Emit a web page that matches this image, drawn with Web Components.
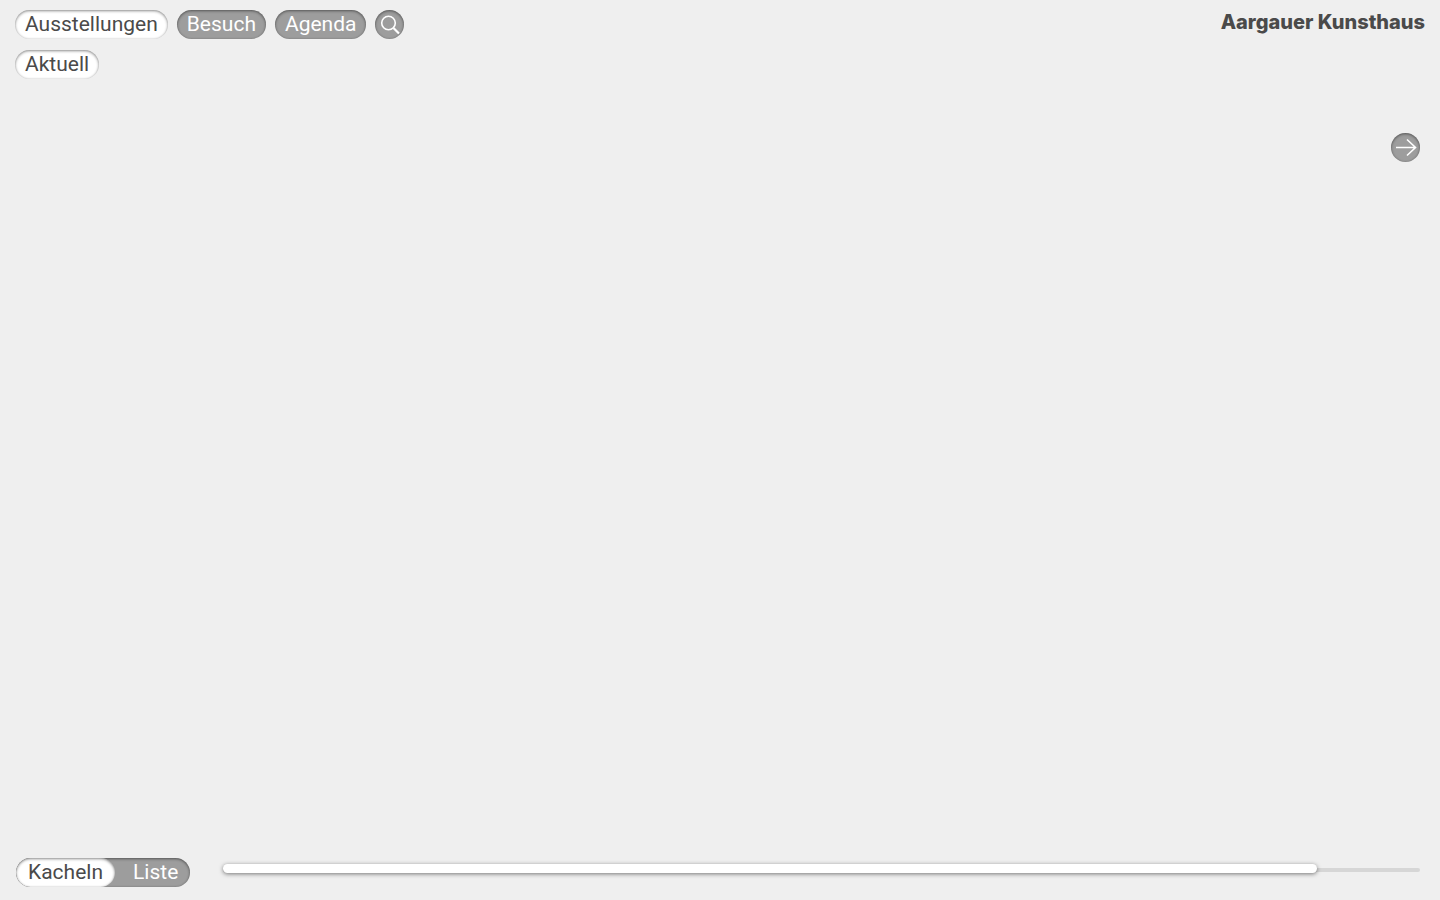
<!DOCTYPE html>
<html lang="de">
<head>
<meta charset="utf-8">
<meta name="viewport" content="width=device-width, initial-scale=1">
<title>Aargauer Kunsthaus</title>
<style>
  html, body { margin: 0; min-height: 100%; }
  body {
    --ink: #4a4a4a;
    --grey: #9d9d9d;
    --groove: inset 0 1px 3px rgba(0, 0, 0, .45), inset 0 0 2px rgba(0, 0, 0, .1);
    background: #efefef;
    color: var(--ink);
    font: 21px/28px Roboto, "Liberation Sans", sans-serif;
  }
</style>
</head>
<body>
<museum-page>
  <main-nav slot="nav">
    <pill-link active href="#ausstellungen">Ausstellungen</pill-link>
    <pill-link href="#besuch">Besuch</pill-link>
    <pill-link href="#agenda">Agenda</pill-link>
    <round-button label="Suche" icon="search"></round-button>
  </main-nav>
  <site-brand slot="brand">Aargauer Kunsthaus</site-brand>
  <main-nav slot="subnav">
    <pill-link active href="#aktuell">Aktuell</pill-link>
  </main-nav>
  <round-button slot="next" label="Weiter" icon="arrow"></round-button>
  <view-toggle slot="view"></view-toggle>
  <tile-scroller slot="scroll"></tile-scroller>
</museum-page>
<script>
const define = (name, html, setup) => {
  const template = document.createElement('template');
  template.innerHTML = html;
  customElements.define(name, class extends HTMLElement {
    constructor() {
      super();
      this.attachShadow({ mode: 'open' }).append(template.content.cloneNode(true));
    }
    connectedCallback() { if (setup) setup(this, this.shadowRoot); }
  });
};

define('museum-page', `
  <style>
    :host { display: flex; flex-direction: column; min-height: 100vh; box-sizing: border-box; padding: 10px 15px 13px; }
    header { display: flex; justify-content: space-between; align-items: flex-start; }
    .sub { margin-top: 11px; }
    main { flex: 1; display: flex; justify-content: flex-end; align-items: flex-start; padding: 54px 5px 0 0; }
    footer { display: flex; align-items: flex-start; gap: 33px; padding: 0 5px 0 1px; }
    ::slotted([slot=scroll]) { flex: 1; }
  </style>
  <header><slot name="nav"></slot><slot name="brand"></slot></header>
  <div class="sub"><slot name="subnav"></slot></div>
  <main><slot name="next"></slot></main>
  <footer><slot name="view"></slot><slot name="scroll"></slot></footer>
`);

define('main-nav', `
  <style>
    :host { display: block; }
    nav { display: flex; gap: 9px; }
  </style>
  <nav><slot></slot></nav>
`);

define('pill-link', `
  <style>
    :host { display: block; }
    a {
      display: block; box-sizing: border-box; height: 29px; padding: 0 10px;
      border-radius: 15px; background: var(--grey); box-shadow: var(--groove);
      color: #fff; text-decoration: none; white-space: nowrap;
    }
    :host([active]) a { background: #fff; color: var(--ink); }
  </style>
  <a><slot></slot></a>
`, (host, root) => { root.querySelector('a').href = host.getAttribute('href'); });

define('site-brand', `
  <style>
    :host { display: block; }
    a { display: block; color: inherit; text-decoration: none; font: 800 20px/24px Inter, "Liberation Sans", sans-serif; }
  </style>
  <a href="#start"><slot></slot></a>
`);

const icons = {
  search: '<circle cx="13.5" cy="13" r="6.8" stroke-width="1.6"/><path d="M18.5 18 24 23.5" stroke-width="2.2"/>',
  arrow: '<path d="M5 14.5H24.5M16 6.5 24.5 14.5 16 22.5" stroke-width="1.6"/>'
};
define('round-button', `
  <style>
    :host { display: block; }
    button {
      display: block; width: 29px; height: 29px; padding: 0; border: 0;
      border-radius: 50%; background: var(--grey); box-shadow: var(--groove);
    }
    svg { display: block; fill: none; stroke: #fff; }
  </style>
  <button type="button"><svg viewBox="0 0 29 29" width="29" height="29" aria-hidden="true"></svg></button>
`, (host, root) => {
  root.querySelector('button').setAttribute('aria-label', host.getAttribute('label'));
  root.querySelector('svg').innerHTML = icons[host.getAttribute('icon')];
});

define('view-toggle', `
  <style>
    :host { display: block; }
    fieldset {
      display: flex; margin: 0; padding: 0; border: 0; height: 29px; min-width: 0;
      border-radius: 15px; overflow: hidden; background: var(--grey); box-shadow: var(--groove);
    }
    input { appearance: none; width: 0; height: 0; margin: 0; }
    label { padding: 0 12px; border-radius: 15px; color: #fff; }
    label + input + label { padding-left: 18px; }
    input:checked + label { background: #fff; color: var(--ink); box-shadow: var(--groove); }
  </style>
  <fieldset aria-label="Ansicht">
    <input type="radio" name="view" id="tiles" checked><label for="tiles">Kacheln</label>
    <input type="radio" name="view" id="list"><label for="list">Liste</label>
  </fieldset>
`);

define('tile-scroller', `
  <style>
    :host { display: flex; min-width: 0; }
    input { appearance: none; width: 100%; height: 24px; margin: 0; background: none; }
    input::-webkit-slider-runnable-track {
      height: 4px; border-radius: 2px; background: #d6d6d6;
    }
    input::-webkit-slider-thumb {
      appearance: none; width: 91.4%; height: 9px; margin-top: -4px;
      border-radius: 5px; background: #fff; box-shadow: 0 1px 4px rgba(0, 0, 0, .5);
    }
  </style>
  <input type="range" min="0" max="100" value="0" aria-label="Kacheln verschieben">
`);
</script>
</body>
</html>
